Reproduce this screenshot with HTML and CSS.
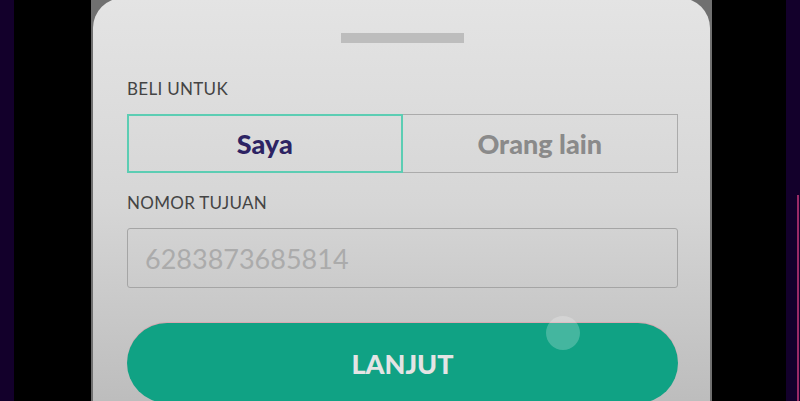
FILE: index.html
```html
<!DOCTYPE html>
<html lang="en">
<head>
    <meta charset="UTF-8">
    <meta name="viewport" content="width=device-width, initial-scale=1.0">
    <title>Beli Pulsa</title>
    <link rel="stylesheet" href="styles.css">
</head>
<body>

<div class="frame">
    <div class="edge"></div>
    <div class="blank"></div>

    <!-- Dimmed phone screen with the bottom sheet -->
    <div class="screen">
        <div class="sheet">
            <div class="handle"></div>

            <p class="label">BELI UNTUK</p>
            <div class="toggle">
                <button class="option active">Saya</button>
                <button class="option">Orang lain</button>
            </div>

            <p class="label">NOMOR TUJUAN</p>
            <input type="text" class="number" placeholder="6283873685814" />

            <button class="next">
                LANJUT
                <span class="ripple"></span>
            </button>
        </div>
    </div>

    <div class="blank blank-right"></div>
    <div class="edge edge-right">
        <div class="edge-line"></div>
    </div>
</div>

</body>
</html>
```

FILE: styles.css
```css
* {
    box-sizing: border-box;
    margin: 0;
    padding: 0;
}

body {
    font-family: 'Lato', 'Liberation Sans', sans-serif;
    background-color: #000;
    height: 401px;
    overflow: hidden;
}

.frame {
    display: flex;
    height: 401px;
}

.edge {
    width: 14px;
    flex-shrink: 0;
    background-color: #13002b;
}

.edge-right {
    padding-top: 195px;
}

.edge-line {
    width: 2px;
    height: 100%;
    margin-left: 11px;
    background-color: #9a2a66;
}

.blank {
    width: 77px;
    flex-shrink: 0;
}

.blank-right {
    width: 74px;
}

.screen {
    width: 621px;
    flex-shrink: 0;
    background-color: #707070;
    padding: 0 2px;
}

.sheet {
    margin-top: -2px;
    height: 410px;
    border-radius: 30px 30px 0 0;
    background: linear-gradient(to bottom, #e4e4e4 0%, #d6d6d6 50%, #bcbcbc 100%);
    padding: 35px 32px 0 34px;
}

.handle {
    width: 123px;
    height: 10px;
    margin: 0 auto;
    background-color: #bdbdbd;
}

.label {
    font-size: 17px;
    line-height: 20px;
    color: #444;
    letter-spacing: 0.3px;
    margin-top: 36px;
    margin-bottom: 15px;
}

.toggle {
    display: grid;
    grid-template-columns: 1fr 1fr;
    height: 59px;
    margin-bottom: 20px;
}

.option {
    font-family: inherit;
    font-size: 27px;
    font-weight: 900;
    color: #8a8a8a;
    background: transparent;
    border: 1px solid #ababab;
    border-left: none;
}

.option.active {
    color: #2d2363;
    border: 2px solid #5ccdb3;
}

.toggle + .label {
    margin-top: 0;
}

.number {
    display: block;
    width: 100%;
    height: 60px;
    padding-left: 17px;
    font-family: inherit;
    font-size: 27px;
    background: transparent;
    border: 1px solid #a5a5a5;
    border-radius: 3px;
}

.number::placeholder {
    color: #ababab;
}

.next {
    position: relative;
    display: block;
    width: 100%;
    height: 80px;
    margin-top: 35px;
    border: none;
    border-radius: 40px;
    background-color: #10a284;
    color: #e4e4e4;
    font-family: inherit;
    font-size: 27px;
    font-weight: 900;
    box-shadow: 0 -1px 0 #d9a9b2;
}

.ripple {
    position: absolute;
    left: 419px;
    top: -7px;
    width: 34px;
    height: 34px;
    border-radius: 50%;
    background-color: rgba(255, 255, 255, 0.22);
}
```
